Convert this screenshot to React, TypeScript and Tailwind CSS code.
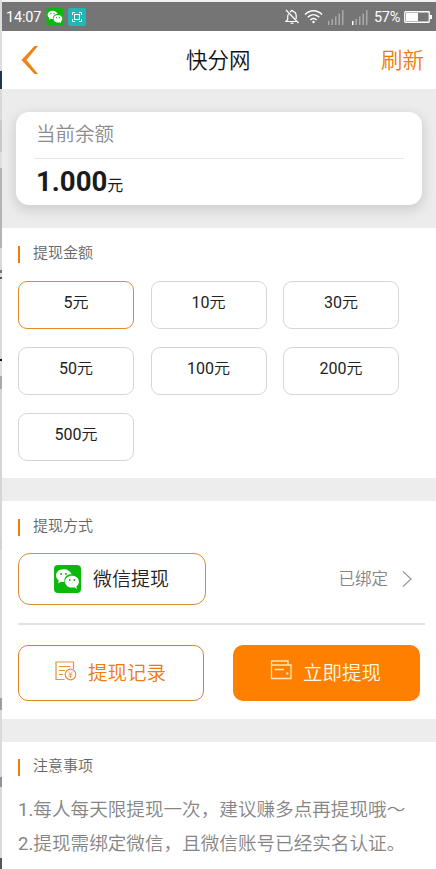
import React from 'react';

const EDGE: [number, string][] = [
  [71, '#dcdcde'], [18, '#1e3558'], [31, '#d8d8d8'], [32, '#c9c9c9'], [16, '#dedede'],
  [80, '#b4b4b4'], [22, '#d9d9d9'], [3, '#777777'], [4, '#dedede'], [2, '#555555'],
  [80, '#dadada'], [2, '#111111'], [15, '#dedede'], [13, '#a9a9a9'], [149, '#d6d6d6'],
  [12, '#d3d3cc'], [148, '#dadada'], [12, '#9c9ca2'], [67, '#dadada'], [10, '#9090a0'],
  [71, '#dadada'], [11, '#55555a'],
];

function WeChatLogo({ className }: { className: string }) {
  return (
    <svg viewBox="0 0 27 28" className={className}>
      <rect width="27" height="28" rx="4" fill="#0cb80c" />
      <path d="M9.4 4.2C5.2 4.2 2 7 2 10.5c0 2 1.1 3.7 2.8 4.9L4 18.300l3.200-1.600c.8.2 1.4.3 2.2.3h1.200c-1.1-4.500 2.600-7.900 6.900-7.700C16.700 6.300 13.400 4.200 9.400 4.200Z" fill="#fff" />
      <path d="M18 10.800c-3.900 0-6.900 2.600-6.900 5.900s3 5.900 6.900 5.900c.8 0 1.600-.1 2.300-.3l2.800 1.600-.8-2.500c1.600-1.100 2.600-2.700 2.600-4.700 0-3.300-3-5.900-6.900-5.900Z" fill="#fff" />
      <g fill="#0cb80c">
        <circle cx="7.100" cy="8.900" r="1" /><circle cx="12" cy="8.900" r="1" />
        <circle cx="15.700" cy="15" r=".9" /><circle cx="20.300" cy="15" r=".9" />
      </g>
    </svg>
  );
}

function Signal({ first }: { first: string }) {
  return (
    <svg viewBox="0 0 17 15" className="h-[15px] w-[17px]" fill="#a9a9a9">
      <rect x="0" y="11" width="1.500" height="4" fill={first} />
      <rect x="3.500" y="9" width="1.500" height="6" />
      <rect x="7" y="6.500" width="1.500" height="8.500" />
      <rect x="10.500" y="3.500" width="1.500" height="11.500" />
      <rect x="14" y="0" width="1.500" height="15" />
    </svg>
  );
}

function StatusBar() {
  return (
    <div className="flex h-[29px] items-center bg-[#757575] pl-1 pr-[4px] text-white">
      <span className="w-[37px] whitespace-nowrap pt-px text-[14.500px] leading-[29px] tracking-[-0.2px]">14:07</span>
      <WeChatLogo className="ml-[3px] h-[18px] w-[18px]" />
      <svg viewBox="0 0 18 18" className="ml-1 h-[18px] w-[18px]" fill="none" stroke="#fff">
        <rect width="18" height="18" rx="2.500" fill="#1fb9b5" stroke="none" />
        <path d="M4.500 7V4.500H7M11 4.500h2.500V7M13.500 11v2.500H11M7 13.500H4.500V11" />
        <rect x="6.500" y="6.500" width="5" height="5" />
      </svg>
      <svg viewBox="0 0 16 16" className="ml-auto h-4 w-4" fill="none" stroke="#fff" strokeWidth="1.200">
        <path d="M2 1l12.500 13M4.500 5C3.800 6 3.700 7 3.700 8v2.500L2 12.500h11M6 3c.5-.3.8-.5 1-.6C7 1 9 1 9 2.400c2 .6 3.200 2.300 3.200 4.600v3" />
        <path d="M6.500 14.200h3" />
      </svg>
      <svg viewBox="0 0 19 15" className="ml-1 h-[15px] w-[19px]" fill="none" stroke="#fff" strokeWidth="1.500">
        <path d="M1 5.500C6 .4 13 .4 18 5.500M3.700 8.300c3.500-3.400 8.100-3.400 11.600 0M6.300 11c2-1.900 4.400-1.900 6.400 0" />
        <circle cx="9.500" cy="13" r="1.200" fill="#fff" stroke="none" />
      </svg>
      <div className="ml-[5px] mt-px flex gap-[7px]"><Signal first="#a9a9a9" /><Signal first="#ffffff" /></div>
      <span className="ml-[5px] w-[28px] whitespace-nowrap pt-[2px] text-[14.500px] leading-[29px] tracking-[-0.3px]">57%</span>
      <svg viewBox="0 0 28 12" className="ml-[2px] h-3 w-7">
        <rect x=".75" y=".75" width="24.500" height="10.500" rx=".7" fill="none" stroke="#fff" strokeWidth="1.300" />
        <rect x="2" y="2" width="12" height="8" fill="#fff" />
        <rect x="26" y="4" width="2" height="4" fill="#fff" />
      </svg>
    </div>
  );
}

function SectionTitle({ children }: { children: string }) {
  return (
    <div className="flex h-[18px] items-center">
      <span className="h-[17px] w-[2px] bg-[#f07c0a]" />
      <h2 className="-mt-[2px] ml-[13px] text-[15px] font-[350] leading-[18px] text-[#666]">{children}</h2>
    </div>
  );
}

export default function App() {
  const amounts = [5, 10, 30, 50, 100, 200, 500];
  return (
    <div className="flex h-[869px] w-[436px] overflow-hidden bg-white font-[Roboto,'Noto_Sans_CJK_SC',sans-serif]">
      <div className="flex w-[2px] shrink-0 flex-col">
        {EDGE.map(([h, c], i) => <span key={i} className="shrink-0" style={{ height: h, background: c }} />)}
      </div>
      <main className="flex min-w-0 flex-1 flex-col">
        <div className="h-[2px] shrink-0 bg-[#f1f1f1]" />
        <StatusBar />
        <header className="flex h-[58px] items-center pl-[19px] pr-[12px]">
          <svg viewBox="0 0 18 28" className="h-7 w-[18px]"><path d="M13.500 0H17L5.500 14 17 28h-3.500L.5 14Z" fill="#ee8318" /></svg>
          <h1 className="ml-[147px] pt-[2px] text-[21.500px] font-[350] leading-[58px] text-[#111]">快分网</h1>
          <button className="ml-auto pt-[2px] text-[21.500px] font-[350] leading-[58px] text-[#ee7b0a]">刷新</button>
        </header>

        <section className="h-[139px] overflow-hidden bg-[#ececec] pl-[14px] pr-[14px] pt-[23px]">
          <div className="h-[93px] rounded-[13px] bg-white px-[18px] shadow-[0_4px_12px_2px_rgba(0,0,0,0.12)]">
            <p className="h-[46px] pl-[2px] text-[19.500px] font-[350] leading-[46px] text-[#8c8c8c]">当前余额</p>
            <div className="h-px bg-[#e6e6e6]" />
            <p className="flex items-baseline pl-[2px] leading-[45px] text-[#1b1b1b]">
              <strong className="text-[27.600px] font-bold">1.000</strong><span className="text-[16px]">元</span>
            </p>
          </div>
        </section>

        <section className="h-[250px] px-4 pt-[17px]">
          <SectionTitle>提现金额</SectionTitle>
          <div className="mt-[18px] grid grid-cols-[116px_116px_116px] gap-x-[16.500px] gap-y-[18px]">
            {amounts.map((a, i) => (
              <button key={a} className={`h-12 rounded-[9px] border pb-[5px] text-[16px] leading-[41px] text-[#222] ${i === 0 ? 'border-[#e08a2c]' : 'border-[#d6d6d6]'}`}>
                {a}<span className="font-[350]">元</span>
              </button>
            ))}
          </div>
        </section>

        <div className="h-[23px] bg-[#ededed]" />

        <section className="h-[218px] px-4 pt-[17px]">
          <SectionTitle>提现方式</SectionTitle>
          <div className="mt-[17px] flex h-[52px] items-center">
            <button className="flex h-[52px] w-[188px] items-center rounded-[12px] border border-[#dd8a35] pl-[35px] text-[19px] font-[350] text-[#222]">
              <WeChatLogo className="h-7 w-[27px]" />
              <span className="ml-3 pt-[3px]">微信提现</span>
            </button>
            <span className="ml-auto pt-[2px] text-[16.500px] font-[350] text-[#858585]">已绑定</span>
            <svg viewBox="0 0 10 16" className="ml-[14px] mr-[8px] h-4 w-[10px]" fill="none" stroke="#999" strokeWidth="1.200"><path d="M1 .5 9 8 1 15.500" /></svg>
          </div>
          <div className="-mr-[5px] mt-[18px] h-[2px] bg-[#e2e2e2]" />
          <div className="mt-5 flex gap-[29px]">
            <button className="flex h-14 w-[187px] items-center rounded-[10px] border border-[#dc8226] pl-9 text-[19.500px] font-[350] text-[#ee7b0a]">
              <svg viewBox="0 0 22 20" className="mb-[5px] h-5 w-[22px]" fill="none" stroke="#e5933f" strokeWidth="1.200">
                <path d="M18.500 8V1H1v17.500h8.500M4 5.500h11.500M4 9.500h6M4 13.500h4" />
                <circle cx="15.500" cy="13.500" r="5.300" />
                <path d="M13.300 10.500l2.200 2.500 2.200-2.500M15.500 13V17M13.500 13.300h4M13.500 15.200h4" strokeWidth=".8" />
              </svg>
              <span className="ml-[11px] pt-px">提现记录</span>
            </button>
            <button className="flex h-14 w-[187px] shrink-0 items-center rounded-[10px] bg-[#ff8000] pl-[37px] text-[19.500px] font-[350] text-[#fffbe8]">
              <svg viewBox="0 0 22 20" className="mb-[7px] h-5 w-[22px]" fill="none" stroke="#ffe9bd" strokeWidth="1.300">
                <path d="M18 5V1H1.500v17.500H21V5H1.500M4.500 9.500H14" />
                <circle cx="17.200" cy="13.500" r="1.200" fill="#ffe9bd" stroke="none" />
              </svg>
              <span className="ml-[11px] pt-px">立即提现</span>
            </button>
          </div>
        </section>

        <div className="h-[23px] bg-[#ededed]" />

        <section className="px-4 pt-4">
          <SectionTitle>注意事项</SectionTitle>
          <div className="mt-[17px] whitespace-nowrap text-[18.600px] font-[350] leading-[34px] text-[#858585]">
            <p><span className="font-normal">1.</span>每人每天限提现一次，建议赚多点再提现哦～</p>
            <p><span className="font-normal">2.</span>提现需绑定微信，且微信账号已经实名认证。</p>
          </div>
        </section>
      </main>
    </div>
  );
}
